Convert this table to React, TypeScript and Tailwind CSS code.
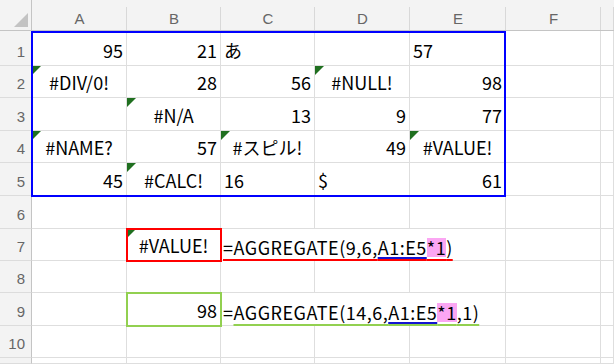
type Align = "l" | "r" | "c";

interface CellDef {
  v: string;
  a: Align;
  err?: boolean;
}

const n = (v: string): CellDef => ({ v, a: "r" });
const l = (v: string): CellDef => ({ v, a: "l" });
const e = (v: string): CellDef => ({ v, a: "c", err: true });

const data: (CellDef | null)[][] = [
  [n("95"), n("21"), l("あ"), null, l("57")],
  [e("#DIV/0!"), n("28"), n("56"), e("#NULL!"), n("98")],
  [null, e("#N/A"), n("13"), n("9"), n("77")],
  [e("#NAME?"), n("57"), e("#スピル!"), n("49"), e("#VALUE!")],
  [n("45"), e("#CALC!"), l("16"), l("$"), n("61")],
];

const colLetters = ["A", "B", "C", "D", "E", "F", ""];

const cellFont = "font-['Noto_Sans_CJK_JP',sans-serif] text-[18px] leading-[24px] text-black";
const headFont = "font-['Liberation_Sans',Arial,sans-serif] text-[15px] leading-[18px] text-[#666]";
const pink =
  "bg-[linear-gradient(to_bottom,transparent_4px,#fba6f3_4px,#fba6f3_23px,transparent_23px)]";

function ErrorMark() {
  return (
    <svg className="absolute left-0 top-0" width="9" height="9" viewBox="0 0 9 9">
      <polygon points="0,0 9,0 0,9" fill="#1f6f1f" />
    </svg>
  );
}

function Cell({ c, extra = "" }: { c?: CellDef | null; extra?: string }) {
  const justify = !c ? "" : c.a === "r" ? "justify-end" : c.a === "c" ? "justify-center" : "justify-start";
  return (
    <div
      className={`relative flex items-end overflow-hidden whitespace-nowrap border-b border-r border-[#dedede] px-[3px] pb-[3px] ${cellFont} ${justify} ${extra}`}
    >
      {c?.err && <ErrorMark />}
      {c && <span>{c.v}</span>}
    </div>
  );
}

function RowHead({ label }: { label: string }) {
  return (
    <div
      className={`flex items-end justify-end border-b border-r border-b-[#dcdcdc] border-r-[#c4c4c4] bg-[#f3f3f3] pb-[4px] pr-[6px] ${headFont}`}
    >
      {label}
    </div>
  );
}

export default function App() {
  const blank = [null, null, null, null, null, null, null];

  return (
    <div className="relative grid h-[364px] w-[614px] grid-cols-[32px_95px_94px_94px_95px_96px_95px_1fr] grid-rows-[31px_35px_32px_33px_32px_33px_33px_32px_32px_33px_32px_1fr] overflow-hidden bg-white">
      {/* corner */}
      <div className="relative border-b border-r border-[#c4c4c4] bg-[#f3f3f3]">
        <svg className="absolute left-0 top-0" width="32" height="31" viewBox="0 0 32 31">
          <polygon points="28,13 28,27 14,27" fill="#c3c3c3" />
        </svg>
      </div>
      {colLetters.map((c, i) => (
        <div
          key={i}
          className={`relative flex items-end justify-center border-b border-[#c4c4c4] bg-[#f3f3f3] pb-[2px] ${headFont} after:absolute after:bottom-0 after:right-0 after:top-[7px] after:w-px after:bg-[#d8d8d8]`}
        >
          {c}
        </div>
      ))}

      {/* rows 1-5 */}
      {data.map((row, r) => (
        <div key={r} className="contents">
          <RowHead label={String(r + 1)} />
          {row.map((c, i) => (
            <Cell key={i} c={c} />
          ))}
          <Cell />
          <Cell />
        </div>
      ))}

      {/* row 6 */}
      <RowHead label="6" />
      {blank.map((_, i) => (
        <Cell key={i} />
      ))}

      {/* row 7 */}
      <RowHead label="7" />
      <Cell />
      <div className="relative z-10">
        <Cell c={e("#VALUE!")} extra="h-full" />
        <div className="pointer-events-none absolute -inset-px border-2 border-[#ff0000]" />
      </div>
      <div
        className={`col-span-3 flex items-end whitespace-nowrap border-b border-r border-[#dedede] pb-[1px] pl-[2px] tracking-[0.5px] ${cellFont}`}
      >
        <span className="underline decoration-[#ff0000] decoration-2 underline-offset-[4px]">
          =AGGREGATE(9,6,
          <span className="underline decoration-[#1414d0] decoration-2 underline-offset-[2px]">A1:E5</span>
          <span className={pink}>*1</span>)
        </span>
      </div>
      <Cell />
      <Cell />

      {/* row 8 */}
      <RowHead label="8" />
      {blank.map((_, i) => (
        <Cell key={i} />
      ))}

      {/* row 9 */}
      <RowHead label="9" />
      <Cell />
      <div className="relative z-10">
        <Cell c={n("98")} extra="h-full" />
        <div className="pointer-events-none absolute -inset-px border-2 border-[#92d050]" />
      </div>
      <div
        className={`col-span-3 flex items-end whitespace-nowrap border-b border-r border-[#dedede] pb-[1px] pl-[2px] tracking-[0.5px] ${cellFont}`}
      >
        =
        <span className="underline decoration-[#92d050] decoration-2 underline-offset-[4px]">
          AGGREGATE(14,6,
          <span className="underline decoration-[#1414d0] decoration-2 underline-offset-[2px]">A1:E5</span>
          <span className={pink}>*1</span>,1)
        </span>
      </div>
      <Cell />
      <Cell />

      {/* row 10, and the top of row 11 */}
      {["10", ""].map((label) => (
        <div key={label} className="contents">
          <RowHead label={label} />
          {blank.map((_, i) => (
            <Cell key={i} />
          ))}
        </div>
      ))}

      {/* range outline A1:E5 */}
      <div className="pointer-events-none absolute left-[31px] top-[31px] z-20 h-[166px] w-[475px] border-2 border-[#0000ff]" />
    </div>
  );
}
